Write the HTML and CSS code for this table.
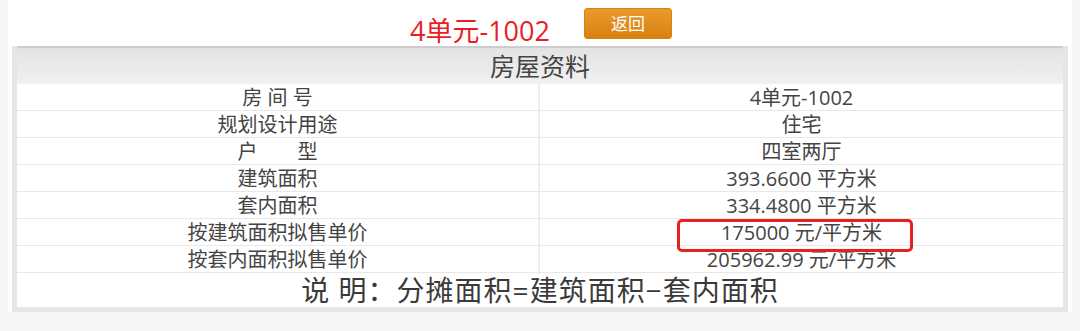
FILE: index.html
```html
<!DOCTYPE html>
<html lang="zh-CN">
<head>
<meta charset="utf-8">
<title>房屋资料</title>
<link rel="stylesheet" href="styles.css">
</head>
<body>
<div class="page">
  <div class="titlebar">
    <span class="unit">4单元-1002</span>
    <a class="back-btn">返回</a>
  </div>
  <div class="frame">
    <div class="head">房屋资料</div>
    <div class="row"><div class="label">房 间 号</div><div class="value">4单元-1002</div></div>
    <div class="row"><div class="label">规划设计用途</div><div class="value">住宅</div></div>
    <div class="row"><div class="label">户　　型</div><div class="value">四室两厅</div></div>
    <div class="row"><div class="label">建筑面积</div><div class="value">393.6600 平方米</div></div>
    <div class="row"><div class="label">套内面积</div><div class="value">334.4800 平方米</div></div>
    <div class="row"><div class="label">按建筑面积拟售单价</div><div class="value marked">175000 元/平方米<span class="mark"></span></div></div>
    <div class="row"><div class="label">按套内面积拟售单价</div><div class="value">205962.99 元/平方米</div></div>
    <div class="note">说 明：分摊面积=建筑面积−套内面积</div>
  </div>
</div>
</body>
</html>
```

FILE: styles.css
```css
html, body {
  margin: 0;
  padding: 0;
}
body {
  background: #f5f5f5;
  font-family: "Open Sans", "Noto Sans CJK SC", sans-serif;
  color: #444444;
  height: 331px;
  overflow: hidden;
}
.page {
  margin-left: 8px;
  width: 1056px;
  padding: 0 4px;
  background: #ffffff;
}
.titlebar {
  height: 46px;
  display: flex;
  justify-content: center;
  align-items: flex-start;
  gap: 32px;
}
.unit {
  width: 144px;
  margin-top: 14px;
  font-size: 27px;
  line-height: 34px;
  color: #ec1c24;
  white-space: nowrap;
  text-align: center;
}
.back-btn {
  margin-top: 8px;
  width: 88px;
  height: 31px;
  border-radius: 3px;
  background: linear-gradient(#ea9a30, #d9800e);
  color: #ffffff;
  font-size: 17px;
  line-height: 30px;
  text-align: center;
  box-sizing: border-box;
  border: 1px solid #d48416;
}
.frame {
  border: 5px solid #e6e6e6;
  border-top: none;
  background: #ffffff;
}
.head {
  height: 36px;
  border-top: 2px solid #cdcdcd;
  background: linear-gradient(#e3e3e3, #f1f1f1);
  text-align: center;
  font-size: 25px;
  line-height: 36px;
  color: #444444;
}
.row {
  display: grid;
  grid-template-columns: 523px 1fr;
  height: 26px;
  border-bottom: 1px solid #e8e8e8;
}
.label, .value {
  text-align: center;
  font-size: 20px;
  line-height: 28px;
  white-space: nowrap;
}
.label {
  border-right: 2px solid #eeeeee;
}
.marked {
  position: relative;
}
.mark {
  position: absolute;
  left: 137px;
  top: 0;
  width: 236px;
  height: 33px;
  box-sizing: border-box;
  border: 3px solid #e8211d;
  border-radius: 5px;
}
.note {
  height: 34px;
  text-align: center;
  font-size: 28px;
  line-height: 34px;
  letter-spacing: 1px;
  color: #3a3a3a;
}
```
